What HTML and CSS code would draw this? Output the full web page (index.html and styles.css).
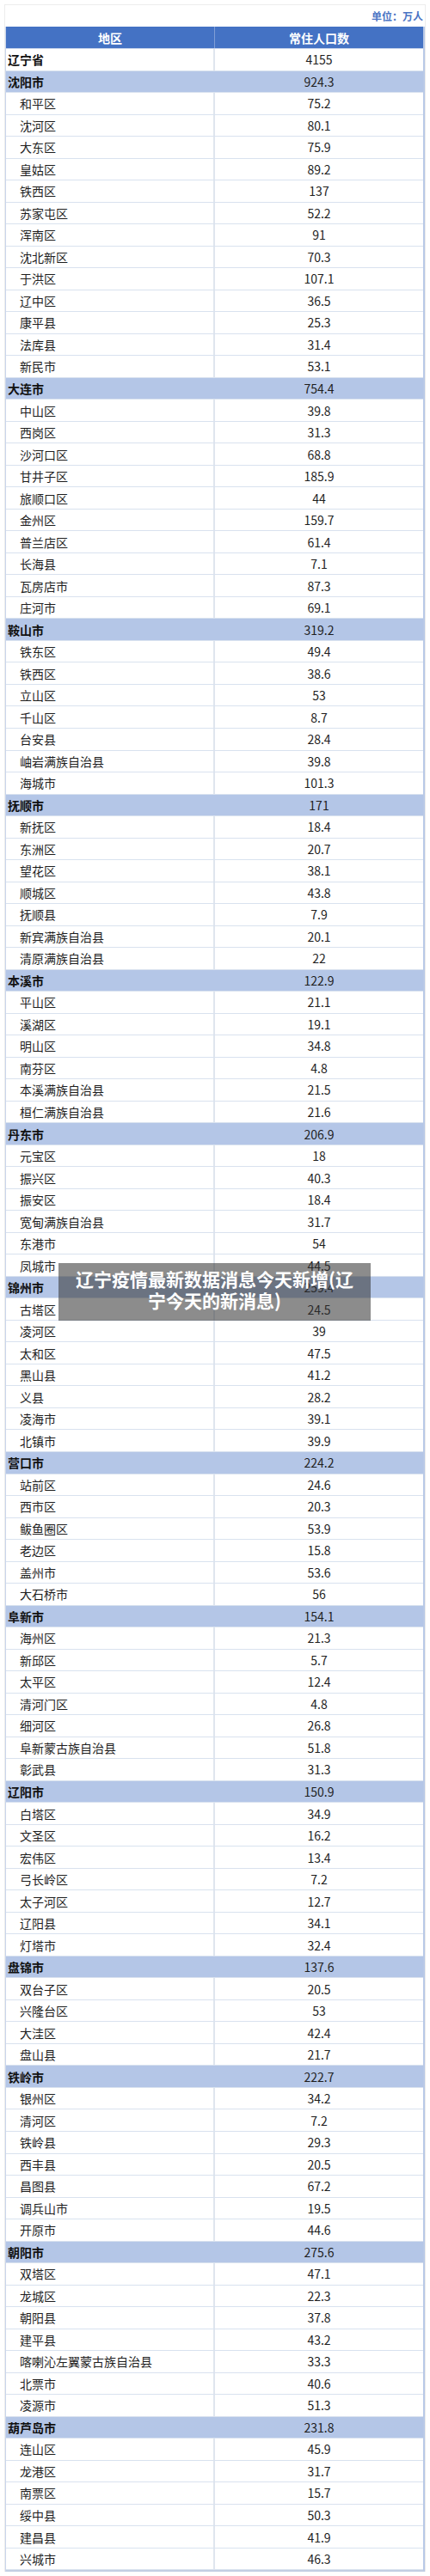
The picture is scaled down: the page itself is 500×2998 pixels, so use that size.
FILE: index.html
```html
<!DOCTYPE html>
<html lang="zh-CN">
<head>
<meta charset="utf-8">
<title>辽宁常住人口</title>
<link rel="stylesheet" href="styles.css">
</head>
<body>
<div class="page">
  <div class="sheet">
    <div class="unit">单位：万人</div>
    <div class="table">
      <div class="row head"><span class="name">地区</span><span class="num">常住人口数</span></div>
      <div class="row prov"><span class="name">辽宁省</span><span class="num">4155</span></div>

      <div class="row city"><span class="name">沈阳市</span><span class="num">924.3</span></div>
      <div class="row"><span class="name">和平区</span><span class="num">75.2</span></div>
      <div class="row"><span class="name">沈河区</span><span class="num">80.1</span></div>
      <div class="row"><span class="name">大东区</span><span class="num">75.9</span></div>
      <div class="row"><span class="name">皇姑区</span><span class="num">89.2</span></div>
      <div class="row"><span class="name">铁西区</span><span class="num">137</span></div>
      <div class="row"><span class="name">苏家屯区</span><span class="num">52.2</span></div>
      <div class="row"><span class="name">浑南区</span><span class="num">91</span></div>
      <div class="row"><span class="name">沈北新区</span><span class="num">70.3</span></div>
      <div class="row"><span class="name">于洪区</span><span class="num">107.1</span></div>
      <div class="row"><span class="name">辽中区</span><span class="num">36.5</span></div>
      <div class="row"><span class="name">康平县</span><span class="num">25.3</span></div>
      <div class="row"><span class="name">法库县</span><span class="num">31.4</span></div>
      <div class="row"><span class="name">新民市</span><span class="num">53.1</span></div>

      <div class="row city"><span class="name">大连市</span><span class="num">754.4</span></div>
      <div class="row"><span class="name">中山区</span><span class="num">39.8</span></div>
      <div class="row"><span class="name">西岗区</span><span class="num">31.3</span></div>
      <div class="row"><span class="name">沙河口区</span><span class="num">68.8</span></div>
      <div class="row"><span class="name">甘井子区</span><span class="num">185.9</span></div>
      <div class="row"><span class="name">旅顺口区</span><span class="num">44</span></div>
      <div class="row"><span class="name">金州区</span><span class="num">159.7</span></div>
      <div class="row"><span class="name">普兰店区</span><span class="num">61.4</span></div>
      <div class="row"><span class="name">长海县</span><span class="num">7.1</span></div>
      <div class="row"><span class="name">瓦房店市</span><span class="num">87.3</span></div>
      <div class="row"><span class="name">庄河市</span><span class="num">69.1</span></div>

      <div class="row city"><span class="name">鞍山市</span><span class="num">319.2</span></div>
      <div class="row"><span class="name">铁东区</span><span class="num">49.4</span></div>
      <div class="row"><span class="name">铁西区</span><span class="num">38.6</span></div>
      <div class="row"><span class="name">立山区</span><span class="num">53</span></div>
      <div class="row"><span class="name">千山区</span><span class="num">8.7</span></div>
      <div class="row"><span class="name">台安县</span><span class="num">28.4</span></div>
      <div class="row"><span class="name">岫岩满族自治县</span><span class="num">39.8</span></div>
      <div class="row"><span class="name">海城市</span><span class="num">101.3</span></div>

      <div class="row city"><span class="name">抚顺市</span><span class="num">171</span></div>
      <div class="row"><span class="name">新抚区</span><span class="num">18.4</span></div>
      <div class="row"><span class="name">东洲区</span><span class="num">20.7</span></div>
      <div class="row"><span class="name">望花区</span><span class="num">38.1</span></div>
      <div class="row"><span class="name">顺城区</span><span class="num">43.8</span></div>
      <div class="row"><span class="name">抚顺县</span><span class="num">7.9</span></div>
      <div class="row"><span class="name">新宾满族自治县</span><span class="num">20.1</span></div>
      <div class="row"><span class="name">清原满族自治县</span><span class="num">22</span></div>

      <div class="row city"><span class="name">本溪市</span><span class="num">122.9</span></div>
      <div class="row"><span class="name">平山区</span><span class="num">21.1</span></div>
      <div class="row"><span class="name">溪湖区</span><span class="num">19.1</span></div>
      <div class="row"><span class="name">明山区</span><span class="num">34.8</span></div>
      <div class="row"><span class="name">南芬区</span><span class="num">4.8</span></div>
      <div class="row"><span class="name">本溪满族自治县</span><span class="num">21.5</span></div>
      <div class="row"><span class="name">桓仁满族自治县</span><span class="num">21.6</span></div>

      <div class="row city"><span class="name">丹东市</span><span class="num">206.9</span></div>
      <div class="row"><span class="name">元宝区</span><span class="num">18</span></div>
      <div class="row"><span class="name">振兴区</span><span class="num">40.3</span></div>
      <div class="row"><span class="name">振安区</span><span class="num">18.4</span></div>
      <div class="row"><span class="name">宽甸满族自治县</span><span class="num">31.7</span></div>
      <div class="row"><span class="name">东港市</span><span class="num">54</span></div>
      <div class="row"><span class="name">凤城市</span><span class="num">44.5</span></div>

      <div class="row city"><span class="name">锦州市</span><span class="num">259.4</span></div>
      <div class="row"><span class="name">古塔区</span><span class="num">24.5</span></div>
      <div class="row"><span class="name">凌河区</span><span class="num">39</span></div>
      <div class="row"><span class="name">太和区</span><span class="num">47.5</span></div>
      <div class="row"><span class="name">黑山县</span><span class="num">41.2</span></div>
      <div class="row"><span class="name">义县</span><span class="num">28.2</span></div>
      <div class="row"><span class="name">凌海市</span><span class="num">39.1</span></div>
      <div class="row"><span class="name">北镇市</span><span class="num">39.9</span></div>

      <div class="row city"><span class="name">营口市</span><span class="num">224.2</span></div>
      <div class="row"><span class="name">站前区</span><span class="num">24.6</span></div>
      <div class="row"><span class="name">西市区</span><span class="num">20.3</span></div>
      <div class="row"><span class="name">鲅鱼圈区</span><span class="num">53.9</span></div>
      <div class="row"><span class="name">老边区</span><span class="num">15.8</span></div>
      <div class="row"><span class="name">盖州市</span><span class="num">53.6</span></div>
      <div class="row"><span class="name">大石桥市</span><span class="num">56</span></div>

      <div class="row city"><span class="name">阜新市</span><span class="num">154.1</span></div>
      <div class="row"><span class="name">海州区</span><span class="num">21.3</span></div>
      <div class="row"><span class="name">新邱区</span><span class="num">5.7</span></div>
      <div class="row"><span class="name">太平区</span><span class="num">12.4</span></div>
      <div class="row"><span class="name">清河门区</span><span class="num">4.8</span></div>
      <div class="row"><span class="name">细河区</span><span class="num">26.8</span></div>
      <div class="row"><span class="name">阜新蒙古族自治县</span><span class="num">51.8</span></div>
      <div class="row"><span class="name">彰武县</span><span class="num">31.3</span></div>

      <div class="row city"><span class="name">辽阳市</span><span class="num">150.9</span></div>
      <div class="row"><span class="name">白塔区</span><span class="num">34.9</span></div>
      <div class="row"><span class="name">文圣区</span><span class="num">16.2</span></div>
      <div class="row"><span class="name">宏伟区</span><span class="num">13.4</span></div>
      <div class="row"><span class="name">弓长岭区</span><span class="num">7.2</span></div>
      <div class="row"><span class="name">太子河区</span><span class="num">12.7</span></div>
      <div class="row"><span class="name">辽阳县</span><span class="num">34.1</span></div>
      <div class="row"><span class="name">灯塔市</span><span class="num">32.4</span></div>

      <div class="row city"><span class="name">盘锦市</span><span class="num">137.6</span></div>
      <div class="row"><span class="name">双台子区</span><span class="num">20.5</span></div>
      <div class="row"><span class="name">兴隆台区</span><span class="num">53</span></div>
      <div class="row"><span class="name">大洼区</span><span class="num">42.4</span></div>
      <div class="row"><span class="name">盘山县</span><span class="num">21.7</span></div>

      <div class="row city"><span class="name">铁岭市</span><span class="num">222.7</span></div>
      <div class="row"><span class="name">银州区</span><span class="num">34.2</span></div>
      <div class="row"><span class="name">清河区</span><span class="num">7.2</span></div>
      <div class="row"><span class="name">铁岭县</span><span class="num">29.3</span></div>
      <div class="row"><span class="name">西丰县</span><span class="num">20.5</span></div>
      <div class="row"><span class="name">昌图县</span><span class="num">67.2</span></div>
      <div class="row"><span class="name">调兵山市</span><span class="num">19.5</span></div>
      <div class="row"><span class="name">开原市</span><span class="num">44.6</span></div>

      <div class="row city"><span class="name">朝阳市</span><span class="num">275.6</span></div>
      <div class="row"><span class="name">双塔区</span><span class="num">47.1</span></div>
      <div class="row"><span class="name">龙城区</span><span class="num">22.3</span></div>
      <div class="row"><span class="name">朝阳县</span><span class="num">37.8</span></div>
      <div class="row"><span class="name">建平县</span><span class="num">43.2</span></div>
      <div class="row"><span class="name">喀喇沁左翼蒙古族自治县</span><span class="num">33.3</span></div>
      <div class="row"><span class="name">北票市</span><span class="num">40.6</span></div>
      <div class="row"><span class="name">凌源市</span><span class="num">51.3</span></div>

      <div class="row city"><span class="name">葫芦岛市</span><span class="num">231.8</span></div>
      <div class="row"><span class="name">连山区</span><span class="num">45.9</span></div>
      <div class="row"><span class="name">龙港区</span><span class="num">31.7</span></div>
      <div class="row"><span class="name">南票区</span><span class="num">15.7</span></div>
      <div class="row"><span class="name">绥中县</span><span class="num">50.3</span></div>
      <div class="row"><span class="name">建昌县</span><span class="num">41.9</span></div>
      <div class="row"><span class="name">兴城市</span><span class="num">46.3</span></div>
    </div>
  </div>
  <div class="banner">辽宁疫情最新数据消息今天新增(辽宁今天的新消息)</div>
</div>
</body>
</html>
```

FILE: styles.css
```css
html, body {
  margin: 0;
  padding: 0;
  background: #ffffff;
}

body {
  font-family: "Noto Sans CJK SC", "Noto Sans", sans-serif;
  color: #1e1e1e;
}

.page {
  position: relative;
  width: 500px;
}

.sheet {
  margin: 5px 5px 0;
  border: 1px solid #ececec;
  border-bottom: 0;
}

.unit {
  height: 25px;
  display: flex;
  align-items: center;
  justify-content: flex-end;
  padding-right: 2px;
  font-size: 12px;
  font-weight: bold;
  color: #4a74c4;
}

.table {
  border-left: 1px solid #c9d5eb;
  border-right: 2px solid #b9c9e6;
  border-bottom: 2px solid #c3cfe3;
}

.row {
  display: grid;
  grid-template-columns: 243px 1fr;
  height: 25.52px;
  box-sizing: border-box;
  border-bottom: 1px solid #d9e2ef;
  font-size: 14px;
  line-height: 1;
}

.row > span {
  display: flex;
  align-items: center;
  white-space: nowrap;
}

.name {
  padding-left: 16px;
  border-right: 2px solid #dfe5ee;
}

.num {
  justify-content: center;
}

.head {
  height: 26px;
  background: #4472c4;
  color: #ffffff;
  font-weight: bold;
  border-bottom: 1px solid #c9d5eb;
}

.head .name {
  justify-content: center;
  padding-left: 0;
  border-right: 1px solid #7f9dd6;
}

.prov .name,
.city .name {
  padding-left: 2px;
  font-weight: bold;
  color: #111111;
}

.city {
  background: #b4c6e7;
}

.city .name {
  border-right-color: #b4c6e7;
}

.banner {
  position: absolute;
  top: 1465px;
  left: 68px;
  width: 363px;
  height: 67px;
  box-sizing: border-box;
  padding: 6px 16px 0;
  background: rgba(50, 50, 50, 0.56);
  color: #ffffff;
  font-size: 21px;
  font-weight: bold;
  line-height: 25px;
  text-align: center;
}
```
